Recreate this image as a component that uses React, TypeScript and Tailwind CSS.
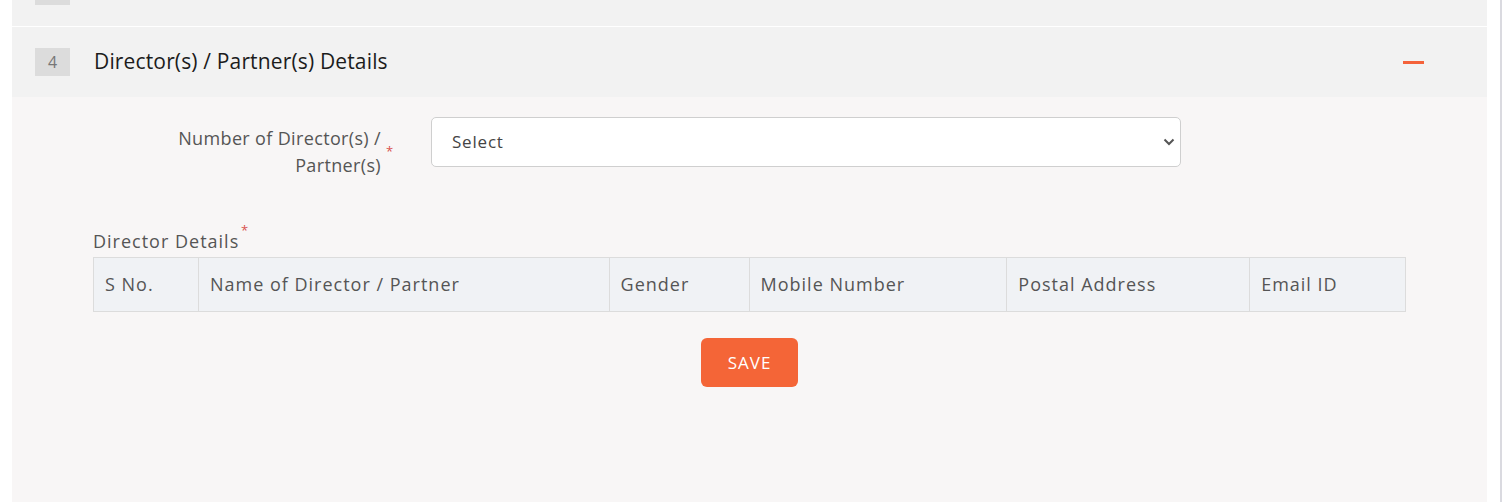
export default function App() {
  const columns = [
    { label: 'S No.', width: 'w-[104px]' },
    { label: 'Name of Director / Partner', width: 'w-[411px]' },
    { label: 'Gender', width: 'w-[140px]' },
    { label: 'Mobile Number', width: 'w-[258px]' },
    { label: 'Postal Address', width: 'w-[243px]' },
    { label: 'Email ID', width: 'w-[156px]' },
  ];

  return (
    <div className="h-[502px] w-full overflow-hidden bg-white flex font-['Open_Sans',sans-serif]">
      <div className="ml-[12px] w-[1475px] flex flex-col">
        {/* previous step, mostly scrolled out of view */}
        <div className="h-[26px] bg-[#f2f2f2] overflow-hidden">
          <div className="h-[70px] -mt-[44px] flex items-center pl-[23px]">
            <div className="w-[35px] h-[28px] bg-[#dcdcdc]"></div>
          </div>
        </div>

        {/* step 4 header */}
        <div className="mt-px h-[70px] bg-[#f2f2f2] flex items-center pl-[23px] pr-[63px]">
          <div className="w-[35px] h-[28px] bg-[#dcdcdc] flex items-center justify-center text-[16px] text-[#777]">4</div>
          <span className="ml-[24px] text-[21px] tracking-[0.15px] text-[#1c1c1c]">Director(s) / Partner(s) Details</span>
          <div className="ml-auto w-[21px] h-[3px] bg-[#f4623a]"></div>
        </div>

        {/* step 4 body */}
        <div className="flex-1 bg-[#f8f6f6] pt-[20px] px-[81px]">
          <div className="flex">
            <div className="relative w-[288px] mt-[8px] text-right text-[18px] tracking-[0.35px] leading-[27px] text-[#555]">
              <span>Number of Director(s) /</span>
              <br />
              <span>Partner(s)</span>
              <span className="absolute left-[293px] top-[20px] text-[13px] leading-none text-[#d9534f]">*</span>
            </div>
            <div className="relative ml-[50px] w-[750px] h-[50px]">
              <select className="appearance-none w-full h-full rounded-[5px] border border-[#cfcfcf] bg-white pl-[20px] text-[17px] tracking-[0.8px] text-[#444] outline-none">
                <option>Select</option>
              </select>
              <svg className="absolute right-[6px] top-[21px] pointer-events-none" width="12" height="8" viewBox="0 0 12 8" fill="none">
                <path d="M1.5 1.5 L6 6 L10.5 1.5" stroke="#555" strokeWidth="2" />
              </svg>
            </div>
          </div>

          <div className="mt-[51px] relative inline-block text-[18px] tracking-[1px] leading-[22px] text-[#555]">
            Director Details
            <span className="absolute -right-[10px] -top-[6px] text-[13px] leading-none text-[#d9534f]">*</span>
          </div>

          <div className="mt-[3px] flex border border-[#dcdcdc] bg-[#f0f2f5]">
            {columns.map((col, i) => (
              <div
                key={i}
                className={`${col.width} h-[53px] flex items-center px-[11px] text-[18px] tracking-[1px] text-[#555] ${i > 0 ? 'border-l border-[#dcdcdc]' : ''}`}
              >
                {col.label}
              </div>
            ))}
          </div>

          <div className="mt-[26px] flex justify-center">
            <button className="w-[97px] h-[49px] rounded-[6px] bg-[#f46537] text-white text-[17px] tracking-[1px]">SAVE</button>
          </div>
        </div>
      </div>
      <div className="ml-auto w-[2px] bg-[#dadae0]"></div>
    </div>
  );
}
